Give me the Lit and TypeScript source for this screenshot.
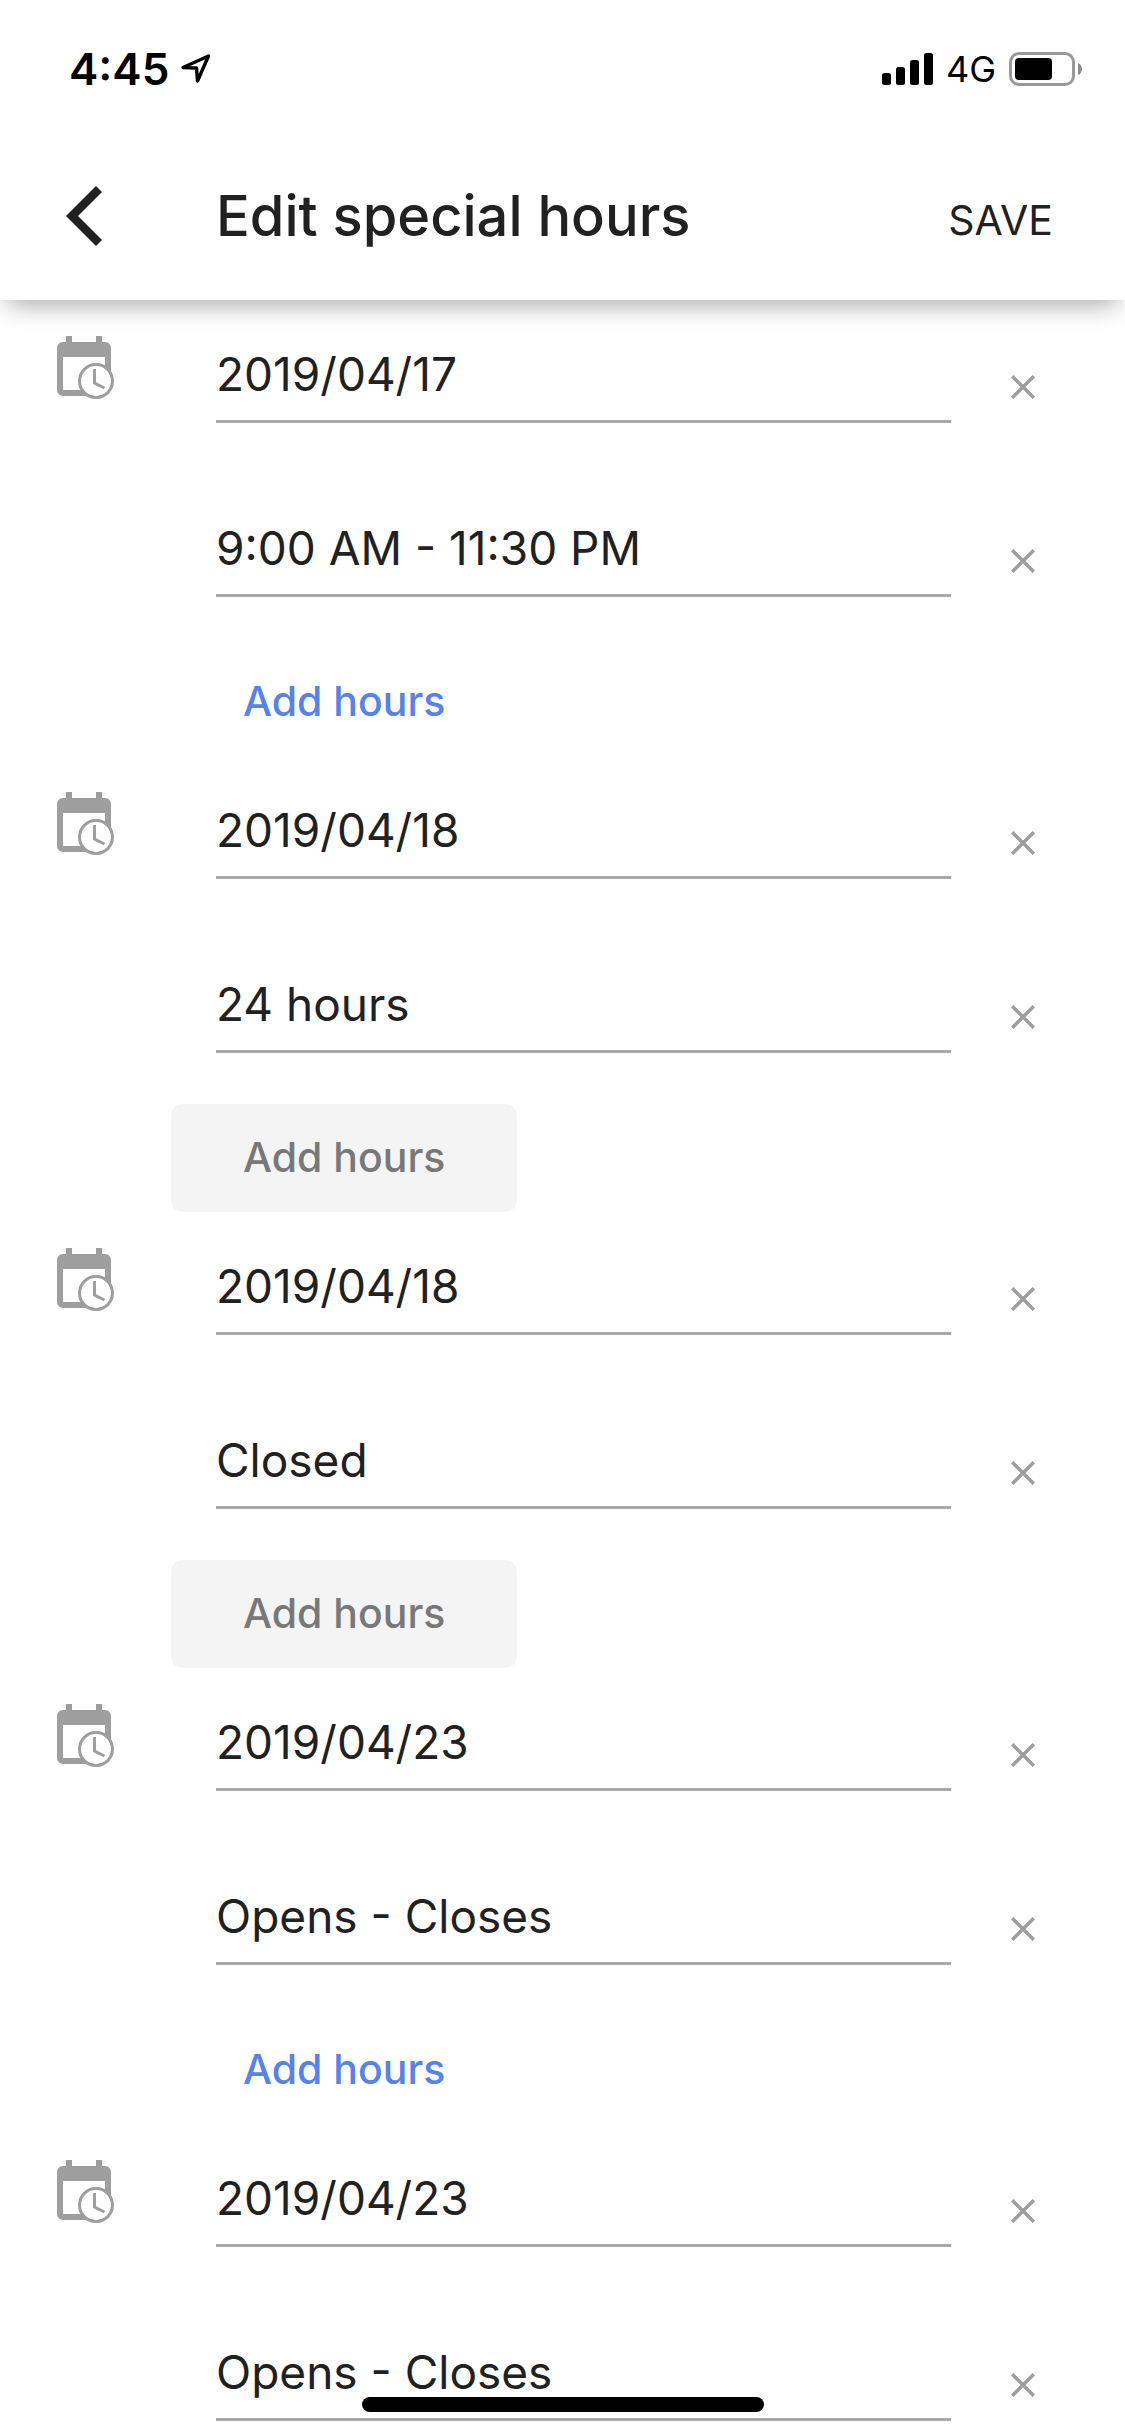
import { LitElement, html, svg, css, nothing } from "lit";
import { customElement, property } from "lit/decorators.js";

interface SpecialDay {
  date: string;
  hours: string;
  add: "enabled" | "disabled" | "none";
}

const DAYS: SpecialDay[] = [
  { date: "2019/04/17", hours: "9:00 AM - 11:30 PM", add: "enabled" },
  { date: "2019/04/18", hours: "24 hours", add: "disabled" },
  { date: "2019/04/18", hours: "Closed", add: "disabled" },
  { date: "2019/04/23", hours: "Opens - Closes", add: "enabled" },
  { date: "2019/04/23", hours: "Opens - Closes", add: "none" },
];

const SIGNAL_HEIGHTS = [12, 18, 25, 32];

@customElement("status-bar")
class StatusBar extends LitElement {
  static styles = css`
    :host {
      display: flex;
      align-items: center;
      justify-content: space-between;
      height: 138px;
      padding: 0 43px 0 69px;
      box-sizing: border-box;
      color: #000;
    }
    .left,
    .right {
      display: flex;
      align-items: center;
    }
    .left {
      gap: 12px;
    }
    .right {
      gap: 13px;
    }
    .time {
      font-size: 44px;
      font-weight: 600;
      line-height: 48px;
    }
    .network {
      font-size: 36px;
      font-weight: 400;
      line-height: 40px;
    }
    svg {
      display: block;
    }
  `;

  render() {
    return html`
      <div class="left">
        <span class="time">4:45</span>
        <svg width="30" height="30" viewBox="0 0 30 30" aria-hidden="true">
          <path
            d="M2 13.5 L27.5 2 L16.5 27 L15.5 14 Z"
            fill="none"
            stroke="#000"
            stroke-width="3.4"
            stroke-linejoin="round"
          />
        </svg>
      </div>
      <div class="right">
        <svg width="51" height="32" viewBox="0 0 51 32" aria-hidden="true">
          ${SIGNAL_HEIGHTS.map(
            (h, i) => svg`<rect x=${i * 14} y=${32 - h} width="9" height=${h} rx="2.5" />`
          )}
        </svg>
        <span class="network">4G</span>
        <svg width="73" height="34" viewBox="0 0 73 34" aria-hidden="true">
          <rect x="1.5" y="1.5" width="63" height="31" rx="8.5" fill="none" stroke="#999" stroke-width="3" />
          <rect x="6" y="6" width="37" height="22" rx="4" />
          <path d="M69 11 C74.300 13 74.300 21 69 23 Z" fill="#8c8c8c" />
        </svg>
      </div>
    `;
  }
}

@customElement("hours-field")
class HoursField extends LitElement {
  static styles = css`
    :host {
      display: grid;
      grid-template-columns: 216px minmax(0, 1fr) 174px;
      align-items: end;
    }
    .icon {
      align-self: start;
      display: block;
      margin-left: 57px;
    }
    .input {
      grid-column: 2;
      width: 100%;
      height: 87px;
      box-sizing: border-box;
      margin: 0;
      padding: 0 0 8px 0;
      border: 0;
      border-bottom: 3px solid #a9a9a9;
      border-radius: 0;
      outline: none;
      background: transparent;
      color: #212121;
      font-family: inherit;
      font-size: 46px;
      font-weight: 400;
    }
    .clear {
      display: flex;
      align-items: center;
      justify-content: center;
      width: 72px;
      height: 72px;
      margin: 0 0 0 36px;
      padding: 0;
      border: 0;
      background: none;
      cursor: pointer;
    }
  `;

  @property() value = "";
  @property() label = "";
  @property({ type: Boolean }) calendar = false;

  render() {
    return html`
      ${this.calendar
        ? html`<svg class="icon" width="57" height="87" viewBox="0 0 57 87" aria-hidden="true">
            <path
              fill="#9e9e9e"
              d="M9 0h6v6h24V0h6v6h3a6 6 0 0 1 6 6v24l-6-4V21H6v33h20l4 6H6a6 6 0 0 1-6-6V12a6 6 0 0 1 6-6h3Z"
            />
            <circle cx="39" cy="45" r="16.500" fill="#fff" stroke="#9e9e9e" stroke-width="3" />
            <path d="M37.500 33v14l10 5" fill="none" stroke="#9e9e9e" stroke-width="3" />
          </svg>`
        : nothing}
      <input class="input" type="text" aria-label=${this.label} .value=${this.value} />
      <button class="clear" type="button" aria-label="Remove">
        <svg width="24" height="24" viewBox="0 0 24 24" aria-hidden="true">
          <path d="M1.200 1.200L22.800 22.800M22.800 1.200L1.200 22.800" stroke="#9e9e9e" stroke-width="3.500" />
        </svg>
      </button>
    `;
  }
}

@customElement("app-root")
class AppRoot extends LitElement {
  static styles = css`
    :host {
      display: block;
      min-height: 100vh;
      background: #fff;
      color: #212121;
      font-family: Inter, "Liberation Sans", sans-serif;
    }
    .header {
      position: relative;
      z-index: 1;
      background: #fff;
      box-shadow: 0 12px 24px -8px rgba(0, 0, 0, 0.36);
    }
    .toolbar {
      display: flex;
      align-items: center;
      height: 162px;
      padding: 0 72px 6px 66px;
      box-sizing: border-box;
    }
    .back,
    .save {
      margin: 0;
      padding: 0;
      border: 0;
      background: none;
      color: inherit;
      font-family: inherit;
      cursor: pointer;
    }
    .back {
      width: 150px;
      flex: none;
      text-align: left;
    }
    .back-icon {
      display: block;
    }
    .title {
      flex: 1;
      margin: 0;
      font-size: 56px;
      font-weight: 500;
      line-height: 72px;
      white-space: nowrap;
    }
    .save {
      padding-top: 8px;
      font-size: 41px;
      font-weight: 400;
      line-height: 48px;
    }
    .day {
      display: flex;
      flex-direction: column;
      align-items: stretch;
      gap: 51px;
      padding-top: 36px;
    }
    .add {
      align-self: flex-start;
      height: 108px;
      margin: 0 0 0 171px;
      padding: 0 72px 2px;
      border: 0;
      border-radius: 12px;
      background: transparent;
      color: #5583ea;
      font-family: inherit;
      font-size: 41px;
      font-weight: 500;
      cursor: pointer;
    }
    .add:disabled {
      background: #f4f4f4;
      color: #787878;
      cursor: default;
    }
    .field {
      height: 123px;
      align-content: end;
    }
    .date {
      height: 87px;
    }
    .home {
      position: fixed;
      bottom: 24px;
      left: 50%;
      z-index: 2;
      width: 402px;
      height: 15px;
      margin-left: -201px;
      border-radius: 8px;
      background: #000;
    }
  `;

  render() {
    return html`
      <header class="header">
        <status-bar></status-bar>
        <div class="toolbar">
          <button class="back" type="button" aria-label="Back">
            <svg class="back-icon" width="37" height="60" viewBox="0 0 37 60" aria-hidden="true">
              <path d="M33 3L6 30L33 57" fill="none" stroke="#212121" stroke-width="8.500" />
            </svg>
          </button>
          <h1 class="title">Edit special hours</h1>
          <button class="save" type="button">SAVE</button>
        </div>
      </header>
      <main>
        ${DAYS.map(
          (day) => html`
            <section class="day">
              <hours-field class="date" calendar label="Date" .value=${day.date}></hours-field>
              <hours-field class="field" label="Hours" .value=${day.hours}></hours-field>
              ${day.add === "none"
                ? nothing
                : html`<button class="add" type="button" ?disabled=${day.add === "disabled"}>Add hours</button>`}
            </section>
          `
        )}
      </main>
      <div class="home"></div>
    `;
  }
}
